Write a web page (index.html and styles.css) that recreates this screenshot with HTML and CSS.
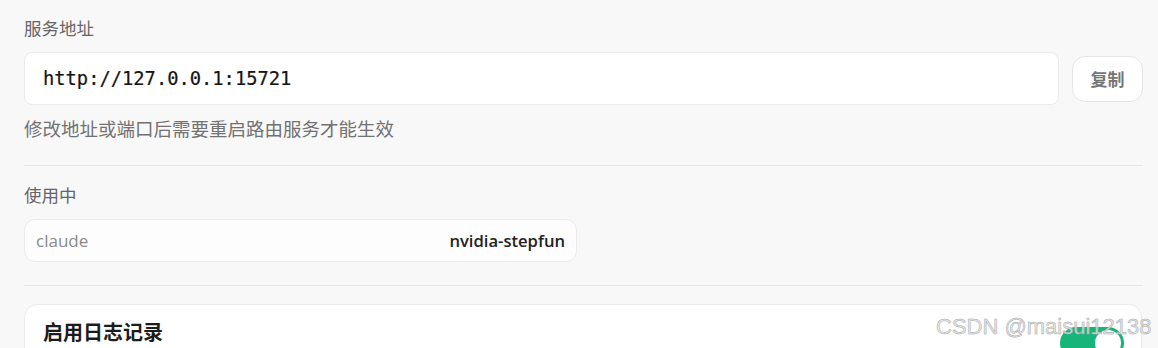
FILE: index.html
```html
<!DOCTYPE html>
<html lang="zh-CN">
<head>
<meta charset="utf-8">
<title>设置</title>
<link rel="stylesheet" href="styles.css">
</head>
<body>
<div class="page">
  <section class="section">
    <div class="label">服务地址</div>
    <div class="addr-row">
      <div class="addr-input">http://127.0.0.1:15721</div>
      <button class="copy-btn">复制</button>
    </div>
    <div class="hint">修改地址或端口后需要重启路由服务才能生效</div>
  </section>
  <hr class="divider">
  <section class="section">
    <div class="label">使用中</div>
    <div class="model-box">
      <span class="model-key">claude</span>
      <span class="model-val">nvidia-stepfun</span>
    </div>
  </section>
  <hr class="divider divider-2">
  <div class="card">
    <div class="card-row">
      <div class="card-title">启用日志记录</div>
      <div class="toggle"><span class="knob"></span></div>
    </div>
  </div>
</div>
<div class="watermark">CSDN @maisui12138</div>
</body>
</html>
```

FILE: styles.css
```css
html, body {
  margin: 0;
  padding: 0;
}
body {
  background: #f8f8f8;
  font-family: "Open Sans", "Noto Sans CJK SC", sans-serif;
  color: #222;
  height: 348px;
  overflow: hidden;
  position: relative;
}
.page {
  padding: 16px 15px 0 24px;
}
.label {
  font-size: 17.5px;
  line-height: 24px;
  color: #666;
}
.addr-row {
  display: flex;
  align-items: center;
  gap: 13px;
  margin-top: 12px;
}
.addr-input {
  flex: 1;
  box-sizing: border-box;
  height: 53px;
  display: flex;
  align-items: center;
  padding-left: 18px;
  background: #fff;
  border: 1px solid #ebebeb;
  border-radius: 8px;
  font-family: "DejaVu Sans Mono", monospace;
  font-size: 18.75px;
  color: #151515;
  -webkit-text-stroke: 0.2px #151515;
}
.copy-btn {
  width: 71px;
  height: 46px;
  box-sizing: border-box;
  background: #fff;
  border: 1px solid #e6e6e6;
  border-radius: 13px;
  font-family: "Noto Sans CJK SC", sans-serif;
  font-size: 17px;
  font-weight: 600;
  color: #767676;
  padding: 0;
}
.hint {
  margin-top: 12px;
  font-size: 18.5px;
  line-height: 24px;
  color: #727272;
}
.divider {
  border: 0;
  border-top: 1px solid #e6e6e6;
  margin: 24px 0 17px 0;
}
.model-box {
  margin-top: 12px;
  width: 553px;
  height: 43px;
  box-sizing: border-box;
  display: flex;
  align-items: center;
  justify-content: space-between;
  padding: 0 11px 0 11px;
  background: #fdfdfd;
  border: 1px solid #ebebeb;
  border-radius: 11px;
  font-size: 17px;
}
.model-key {
  color: #8a8a8a;
}
.model-val {
  color: #222;
  font-weight: 600;
  font-size: 16.6px;
}
.divider-2 {
  margin: 23px 0 18px 0;
}
.card {
  background: #fff;
  border: 1px solid #ebebeb;
  border-radius: 13px;
  padding: 13px 17px 20px 18px;
  margin-right: 1px;
}
.card-row {
  display: flex;
  justify-content: space-between;
  align-items: flex-start;
}
.card-title {
  font-family: "Noto Sans CJK SC", sans-serif;
  font-size: 20px;
  line-height: 28px;
  font-weight: 700;
  color: #1c1c1c;
}
.toggle {
  width: 64px;
  height: 32px;
  margin-top: 9px;
  border-radius: 16px;
  background: #18b57a;
  display: flex;
  align-items: center;
  justify-content: flex-end;
  padding: 0 3px;
  box-sizing: border-box;
}
.knob {
  width: 26px;
  height: 26px;
  border-radius: 50%;
  background: #fff;
}
.watermark {
  position: absolute;
  left: 936px;
  top: 316px;
  font-family: "Liberation Sans", Arial, sans-serif;
  font-size: 22px;
  line-height: 22px;
  color: rgba(225, 225, 225, 0.85);
  -webkit-text-stroke: 0.5px #a8a8a8;
  white-space: nowrap;
}
```
